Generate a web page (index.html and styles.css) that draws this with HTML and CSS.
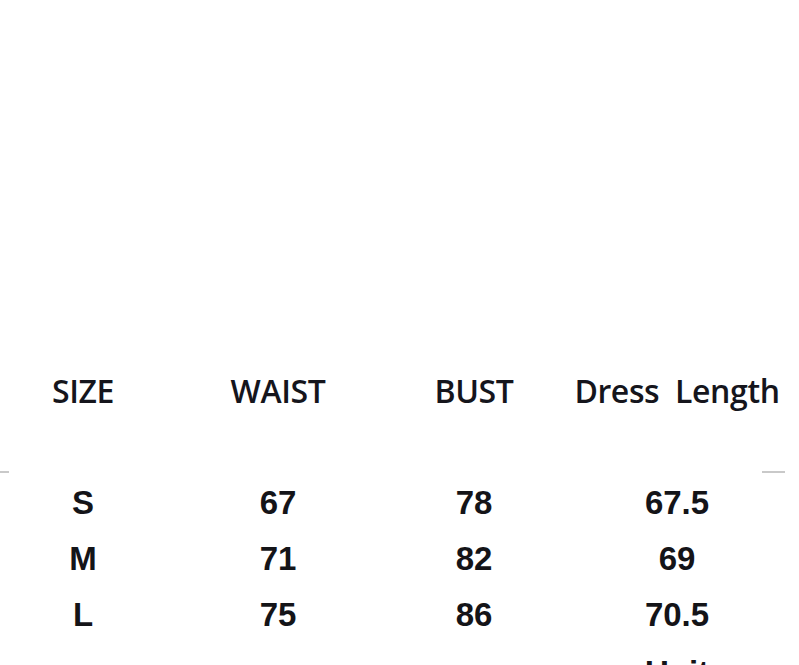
FILE: index.html
```html
<!DOCTYPE html>
<html>
<head>
<meta charset="utf-8">
<link rel="stylesheet" href="styles.css">
</head>
<body>
<main class="page">
  <section class="chart">
    <div class="row head">
      <div class="cell">SIZE</div>
      <div class="cell">WAIST</div>
      <div class="cell">BUST</div>
      <div class="cell">Dress&nbsp; Length</div>
    </div>
    <div class="rule">
      <span class="tick left"></span>
      <span class="tick right"></span>
    </div>
    <div class="row body">
      <div class="cell">S</div>
      <div class="cell">67</div>
      <div class="cell">78</div>
      <div class="cell">67.5</div>
    </div>
    <div class="row body">
      <div class="cell">M</div>
      <div class="cell">71</div>
      <div class="cell">82</div>
      <div class="cell">69</div>
    </div>
    <div class="row body">
      <div class="cell">L</div>
      <div class="cell">75</div>
      <div class="cell">86</div>
      <div class="cell">70.5</div>
    </div>
    <div class="row body tail">
      <div class="cell"></div>
      <div class="cell"></div>
      <div class="cell"></div>
      <div class="cell">Unit</div>
    </div>
  </section>
</main>
</body>
</html>
```

FILE: styles.css
```css
html, body {
  margin: 0;
  padding: 0;
  background: #ffffff;
}
body {
  width: 799px;
  height: 665px;
  overflow: hidden;
  color: #15151c;
}
*, *::before, *::after {
  box-sizing: border-box;
}
.page {
  padding-top: 360px;
}
.row {
  display: grid;
  grid-template-columns: 166px 224px 168px 238px;
  align-items: center;
  text-align: center;
}
.head {
  height: 60px;
  font-family: "Open Sans", "Noto Sans", sans-serif;
  font-weight: 600;
  font-size: 32px;
  letter-spacing: -0.4px;
}
.rule {
  height: 55px;
  display: flex;
  justify-content: space-between;
  align-items: flex-start;
  padding-top: 51px;
  padding-right: 14px;
}
.tick {
  display: block;
  height: 2px;
  background: #c9c9c9;
}
.tick.left { width: 9px; }
.tick.right { width: 23px; }
.body {
  height: 56px;
  font-family: "Liberation Sans", Arial, sans-serif;
  font-weight: 700;
  font-size: 33px;
  color: #141418;
}
.tail {
  margin-top: 2px;
}
```
